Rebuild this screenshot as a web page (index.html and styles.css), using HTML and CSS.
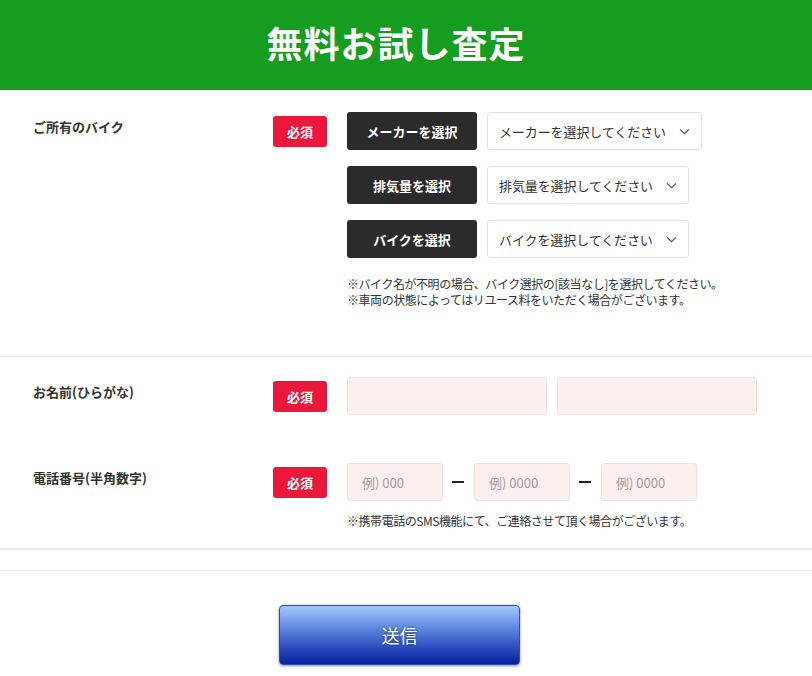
FILE: index.html
```html
<!DOCTYPE html>
<html lang="ja">
<head>
<meta charset="utf-8">
<title>無料お試し査定</title>
<link rel="stylesheet" href="styles.css">
</head>
<body>
<header class="hero"><h1 class="hero-title">無料お試し査定</h1></header>
<form class="form">
  <section class="section section-bike">
    <div class="row">
      <div class="label">ご所有のバイク</div>
      <div class="badge">必須</div>
      <div class="fields">
        <div class="pick">
          <span class="pick-btn">メーカーを選択</span>
          <span class="select">メーカーを選択してください<svg class="chev" viewBox="0 0 12 8" width="11" height="7"><path d="M1 1.5l5 5 5-5" fill="none" stroke="#555" stroke-width="1.4"/></svg></span>
        </div>
        <div class="pick">
          <span class="pick-btn">排気量を選択</span>
          <span class="select">排気量を選択してください<svg class="chev" viewBox="0 0 12 8" width="11" height="7"><path d="M1 1.5l5 5 5-5" fill="none" stroke="#555" stroke-width="1.4"/></svg></span>
        </div>
        <div class="pick">
          <span class="pick-btn">バイクを選択</span>
          <span class="select">バイクを選択してください<svg class="chev" viewBox="0 0 12 8" width="11" height="7"><path d="M1 1.5l5 5 5-5" fill="none" stroke="#555" stroke-width="1.4"/></svg></span>
        </div>
        <p class="note">※バイク名が不明の場合、バイク選択の[該当なし]を選択してください。<br>※車両の状態によってはリユース料をいただく場合がございます。</p>
      </div>
    </div>
  </section>
  <section class="section section-contact">
    <div class="row">
      <div class="label">お名前(ひらがな)</div>
      <div class="badge">必須</div>
      <div class="fields">
        <div class="inputs">
          <span class="input input-name"></span>
          <span class="input input-name"></span>
        </div>
      </div>
    </div>
    <div class="row row-tel">
      <div class="label">電話番号(半角数字)</div>
      <div class="badge">必須</div>
      <div class="fields">
        <div class="inputs tel">
          <span class="input input-tel">例) 000</span>
          <span class="dash"></span>
          <span class="input input-tel">例) 0000</span>
          <span class="dash"></span>
          <span class="input input-tel">例) 0000</span>
        </div>
        <p class="note note-tel">※携帯電話のSMS機能にて、ご連絡させて頂く場合がございます。</p>
      </div>
    </div>
  </section>
  <div class="submit-area">
    <button type="button" class="submit">送信</button>
  </div>
</form>
</body>
</html>
```
FILE: styles.css
```css
* { box-sizing: border-box; }
body {
  margin: 0;
  background: #fff;
  font-family: "Noto Sans CJK JP", "Noto Sans", sans-serif;
  color: #333;
}
.hero {
  height: 90px;
  background: #169c1e;
  display: flex;
  align-items: center;
  justify-content: center;
  padding: 0 20px 6px 0;
}
.hero-title {
  margin: 0;
  color: #fff;
  font-size: 36px;
  font-weight: 700;
  line-height: 1;
  letter-spacing: 1px;
}
.section {
  padding: 22px 0 48px 33px;
  border-bottom: 1px solid #e8e8e8;
}
.section-contact {
  padding-top: 20px;
  padding-bottom: 19px;
  border-bottom: 2px solid #eeeeee;
}
.row {
  display: flex;
  align-items: flex-start;
}
.row-tel { margin-top: 48px; }
.label {
  width: 240px;
  font-size: 13px;
  font-weight: 700;
  line-height: 18px;
  padding-top: 6px;
  color: #333;
}
.badge {
  width: 54px;
  height: 31px;
  margin-top: 4px;
  margin-right: 20px;
  background: #ea183b;
  color: #fff;
  font-size: 13px;
  font-weight: 700;
  border-radius: 3px;
  display: flex;
  align-items: center;
  justify-content: center;
}
.fields {
  display: flex;
  flex-direction: column;
  gap: 16px;
}
.pick {
  display: flex;
  gap: 10px;
}
.pick-btn {
  width: 130px;
  height: 38px;
  background: #2b2b2b;
  color: #fff;
  font-size: 13px;
  font-weight: 700;
  border-radius: 3px;
  display: flex;
  align-items: center;
  justify-content: center;
}
.select {
  height: 38px;
  border: 1px solid #e2e2e2;
  border-radius: 3px;
  padding: 0 11px 0 11px;
  display: flex;
  align-items: center;
  font-size: 13px;
  letter-spacing: -0.1px;
  color: #333;
}
.chev { margin-left: 13px; }
.note {
  margin: 2px 0 0;
  font-size: 12px;
  line-height: 16px;
  letter-spacing: -0.45px;
  color: #333;
}
.note-tel { margin-top: 0; }
.section-contact .fields { gap: 12px; }
.inputs {
  display: flex;
  gap: 10px;
  align-items: center;
}
.inputs.tel { gap: 0; }
.input {
  height: 38px;
  background: #fcefef;
  border: 1px solid #ece2e2;
  border-radius: 3px;
  display: flex;
  align-items: center;
  padding-left: 14px;
  font-size: 13px;
  color: #a0a0a0;
}
.input-name { width: 200px; }
.input-tel { width: 96px; }
.dash {
  width: 12px;
  height: 2px;
  background: #222;
  margin: 0 10px 0 9px;
}
.submit-area {
  margin-top: 20px;
  border-top: 1px solid #e6e6e6;
  padding: 34px 13px 20px 0;
  display: flex;
  justify-content: center;
}
.submit {
  width: 241px;
  height: 60px;
  border: 1px solid #2350b5;
  border-radius: 4px;
  background: linear-gradient(#a2c8fb, #5c86dd 40%, #2f4fc0 70%, #0a1f9c);
  box-shadow: 0 1px 3px rgba(0, 0, 0, 0.45);
  color: #fff;
  font-family: "Noto Sans CJK JP", sans-serif;
  font-size: 18px;
  text-shadow: 0 0 3px rgba(0, 0, 60, 0.5);
  cursor: pointer;
}
```
